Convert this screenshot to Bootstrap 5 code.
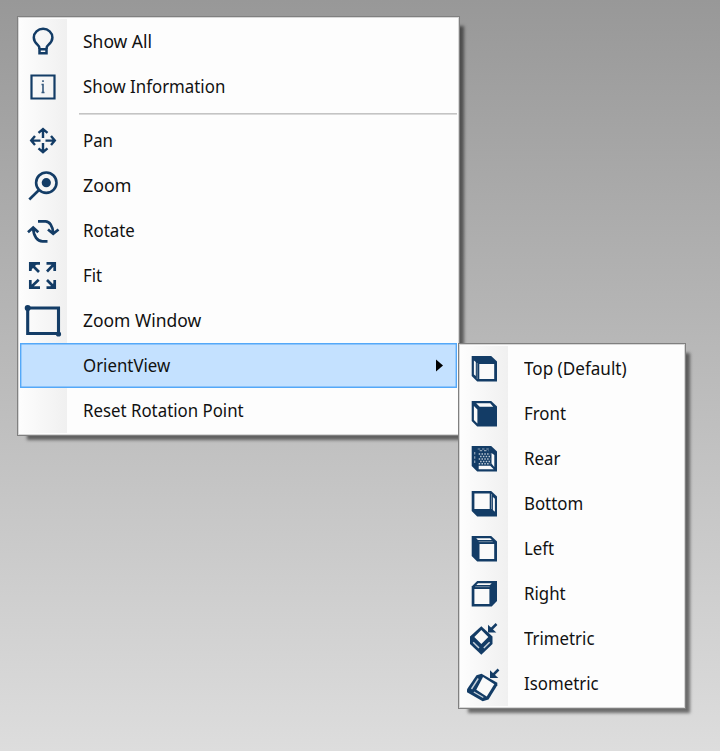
<!DOCTYPE html>
<html lang="en">
<head>
<meta charset="utf-8">
<meta name="viewport" content="width=device-width, initial-scale=1">
<title>View menu</title>
<link href="https://cdn.jsdelivr.net/npm/bootstrap@5.3.0/dist/css/bootstrap.min.css" rel="stylesheet">
<style>
body { background: linear-gradient(180deg, #989898, #dddddd); font-family: "Noto Sans", "Open Sans", sans-serif; }
.viewport { height: 751px; }
.ctx-menu { background: linear-gradient(90deg, #fdfdfd 0, #f8f8f8 18px, #f0f0f0 47px, #fdfdfd 47px) content-box, #fdfdfd; border: 1px solid #808080; outline: 1px solid rgba(128,128,128,.3); outline-offset: -2px; padding: 2px; box-shadow: 7px 7px 3px -3px rgba(0,0,0,.5); }
.ctx-main { left: 17px; top: 16px; width: 443px; }
.ctx-sub { left: 458px; top: 343px; width: 228px; }
.ctx-item { height: 45px; border: 0; padding: 0; background: transparent; color: #111; font-size: 18px; line-height: 45px; }
.ctx-item.chosen { background: #c4e1ff; box-shadow: inset 0 0 0 1.4px #54a8f8; }
.glyph { width: 47px; height: 45px; flex: none; color: #133c66; }
.label-text { margin-left: 16px; transform: scaleX(.935); transform-origin: 0 50%; white-space: nowrap; }
.label-text.fit-a { transform: scaleX(.97); }
.label-text.fit-b { transform: scaleX(.99); }
.label-text.fit-c { transform: scaleX(.95); }
.rule { height: 9px; padding: 4px 0 0 59px; }
.rule > div { height: 2px; background: linear-gradient(#c4c4c4 50%, #dadada 50%); }
.arrow { width: 7px; height: 13px; margin-right: 14px; }
</style>
<script src="https://cdn.jsdelivr.net/npm/bootstrap@5.3.0/dist/js/bootstrap.bundle.min.js"></script>
</head>
<body>
<main class="viewport position-relative overflow-hidden">
<div class="ctx-menu ctx-main position-absolute d-flex flex-column" role="menu">
  <div class="ctx-item d-flex align-items-center" role="menuitem">
    <svg class="glyph" viewBox="0 0 47 45" fill="none" stroke="currentColor" stroke-width="2.500"><path d="M19.300 30v-1.500C19.300 26 13.800 24.500 13.800 18.500a9.300 8.700 0 0 1 18.600 0C32.400 24.500 26.700 26 26.700 28.500V30M19.500 29.500v4.700h7V29.500M19 30.300h8"/></svg>
    <span class="label-text fit-a">Show All</span></div>
  <div class="ctx-item d-flex align-items-center" role="menuitem">
    <svg class="glyph" viewBox="0 0 47 45" fill="none" stroke="currentColor" stroke-width="2.200"><path d="M11.500 11.500h23v23h-23z"/><path stroke-width="1.600" opacity=".85" d="M23 16.200v1.800M21.500 20.500h1.500V28.700M21.500 28.500h3"/></svg>
    <span class="label-text">Show Information</span></div>
  <div class="rule"><div></div></div>
  <div class="ctx-item d-flex align-items-center" role="menuitem">
    <svg class="glyph" viewBox="0 0 47 45" fill="none" stroke="currentColor" stroke-width="2.400"><path d="M23 10.500V20M23 25v9.500M11 22.600h9.500M25.500 22.600H35M18.500 14.800l4.500-3.800 4.500 3.800M18.500 30.400l4.500 3.800 4.500-3.800M15 18.100L11.200 22.600l3.800 4.500M31 18.100l3.800 4.500-3.800 4.500"/></svg>
    <span class="label-text">Pan</span></div>
  <div class="ctx-item d-flex align-items-center" role="menuitem">
    <svg class="glyph" viewBox="0 0 47 45" fill="none" stroke="currentColor" stroke-width="2.600"><circle cx="26.300" cy="19.700" r="10.200"/><circle cx="26.300" cy="19.700" r="4.600" fill="currentColor" stroke="none"/><path d="M19 27L9.300 36.500"/></svg>
    <span class="label-text fit-b">Zoom</span></div>
  <div class="ctx-item d-flex align-items-center" role="menuitem">
    <svg class="glyph" viewBox="0 0 47 45" fill="none" stroke="currentColor" stroke-width="2.700"><path d="M18 13.300h7.500c4 0 7.200 4.500 7.700 11.700M28 21.500l5.200 4.300L38.500 21.500M27.500 33.300h-5c-5 0-9-5-9.300-12.800M8 24.200l5.200-4.700 5.100 4.700"/></svg>
    <span class="label-text">Rotate</span></div>
  <div class="ctx-item d-flex align-items-center" role="menuitem">
    <svg class="glyph" viewBox="0 0 47 45" fill="none" stroke="currentColor" stroke-width="2.700"><path d="M10.300 18v-7.700H20M10.300 10.300l8.700 8.700M26.500 10.300h8.200V18M34.700 10.300L27 18.500M10.300 27v7.700H20M10.300 34.700L18.700 26.800M26.500 34.700h8.200V27M34.700 34.700L27 27"/><path fill="currentColor" stroke="none" d="M10 10h8l-8 8zM35 35h-6l6-6z"/></svg>
    <span class="label-text">Fit</span></div>
  <div class="ctx-item d-flex align-items-center" role="menuitem">
    <svg class="glyph" viewBox="0 0 47 45" fill="none" stroke="currentColor" stroke-width="3.100"><path d="M7.700 10h30.800v25.500H7.700z"/><g fill="currentColor" stroke="none"><circle cx="7.700" cy="10" r="3"/><circle cx="38.500" cy="36" r="2.600"/></g></svg>
    <span class="label-text fit-a">Zoom Window</span></div>
  <div class="ctx-item chosen d-flex align-items-center" role="menuitem" aria-expanded="true">
    <span class="glyph"></span><span class="label-text">OrientView</span>
    <svg class="arrow ms-auto" viewBox="0 0 7 13"><path d="M0 .5L7 6.500 0 12.500z"/></svg></div>
  <div class="ctx-item d-flex align-items-center" role="menuitem">
    <span class="glyph"></span><span class="label-text">Reset Rotation Point</span></div>
</div>

<div class="ctx-menu ctx-sub position-absolute d-flex flex-column" role="menu">
  <div class="ctx-item d-flex align-items-center" role="menuitem">
    <svg class="glyph" viewBox="0 0 47 45"><g transform="translate(10.700 10)"><path fill="currentColor" d="M0 0h19.500l5.800 5.500v20H5.500L0 20z"/><path fill="#fafafa" d="M7.600 8h14.900v15H7.600zM2.200 4.500l1.900 1.500v14L2.200 18.500z"/><path stroke="#71889f" d="M5.500 7v16"/></g></svg>
    <span class="label-text fit-c">Top (Default)</span></div>
  <div class="ctx-item d-flex align-items-center" role="menuitem">
    <svg class="glyph" viewBox="0 0 47 45"><g transform="translate(10.700 10)"><path fill="currentColor" d="M0 0h19.500l5.800 5.500v20H5.500L0 20z"/><path fill="#fafafa" d="M4.500 2.200h14L21.500 5.800H8zM2.200 5l3.500 3.500v14l-3.500-3.500z"/></g></svg>
    <span class="label-text">Front</span></div>
  <div class="ctx-item d-flex align-items-center" role="menuitem">
    <svg class="glyph" viewBox="0 0 47 45"><g transform="translate(10.700 10)"><path fill="currentColor" d="M0 0h19.500l5.800 5.500v20H5.500L0 20z"/><path fill="#fafafa" d="M7 19.800h11.500l3.500 3.500H7zM19.800 7l2.800 2v12L19.800 17.500z"/><path fill="none" stroke="#b9c5d1" stroke-width="1.400" stroke-dasharray="1.500 1.300" d="M7 8h11.500M8.400 10.500h10M7 13h11.500M8.400 15.500h10M7 17.800h11.500"/><path fill="none" stroke="#8ea1b5" stroke-width="1.200" stroke-dasharray="2.500 1.800" d="M6 3h13M8 4.700h9M3 6v12"/></g></svg>
    <span class="label-text">Rear</span></div>
  <div class="ctx-item d-flex align-items-center" role="menuitem">
    <svg class="glyph" viewBox="0 0 47 45"><g transform="translate(10.700 10)"><path fill="currentColor" d="M0 0h19.500l5.800 5.500v20H5.500L0 20z"/><path fill="#fafafa" d="M2.700 2.500h15.300v15.500H2.700zM21.200 6l2 1.800v13l-2-1.700z"/><path stroke="#71889f" d="M19.800 3v15"/></g></svg>
    <span class="label-text">Bottom</span></div>
  <div class="ctx-item d-flex align-items-center" role="menuitem">
    <svg class="glyph" viewBox="0 0 47 45"><g transform="translate(10.700 10)"><path fill="currentColor" d="M0 0h19.500l5.800 5.500v20H5.500L0 20z"/><path fill="#fafafa" d="M7.800 8h14.700v15H7.800zM4.500 2.300h14l1.700 1.700H6.200z"/><path stroke="#71889f" d="M7 5.700h14"/></g></svg>
    <span class="label-text">Left</span></div>
  <div class="ctx-item d-flex align-items-center" role="menuitem">
    <svg class="glyph" viewBox="0 0 47 45"><g transform="translate(10.700 10)"><path fill="currentColor" d="M5.500 0h19.800v20l-5.300 5.500H0V5.500z"/><path fill="#fafafa" d="M2.700 8h15v15h-15zM6.300 2.300H20l-1.700 1.700H4.600z"/><path stroke="#71889f" d="M3.500 5.700H18"/></g></svg>
    <span class="label-text">Right</span></div>
  <div class="ctx-item d-flex align-items-center" role="menuitem">
    <svg class="glyph" viewBox="0 0 47 45"><path fill="currentColor" d="M20.300 10.300L31.500 20.500v7.500L20.300 38.700 9 28v-7.500z"/><path fill="#fafafa" d="M20.300 14l7 7-7 7-7-7z"/><path stroke="#c5d0da" stroke-width="1.500" d="M12.200 26.300l5.800 5.700M28.600 26.300l-5.800 5.700"/><path fill="none" stroke="currentColor" stroke-width="2.500" d="M35.500 8L30 13.500"/><path fill="currentColor" d="M27 8.800l8.300 7.700H27z"/></svg>
    <span class="label-text">Trimetric</span></div>
  <div class="ctx-item d-flex align-items-center" role="menuitem">
    <svg class="glyph" viewBox="0 0 47 45"><path fill="currentColor" d="M15.500 14.200L20.500 12.700l15.800 9v2.500L27.500 38.500 21.700 40.300 6 31.200v-3z"/><path fill="#fafafa" d="M22 16l11.300 7.200-7.600 12.300-10.400-6.700z"/><path stroke="#c5d0da" stroke-width="1.400" d="M17.200 17.500l-6.700 10.500M12.800 31l9.500 5.500"/><path fill="none" stroke="currentColor" stroke-width="2.500" d="M37.500 8.500L32 14"/><path fill="currentColor" d="M29 9.300l8.300 7.700H29z"/></svg>
    <span class="label-text">Isometric</span></div>
</div>
</main>
</body>
</html>
